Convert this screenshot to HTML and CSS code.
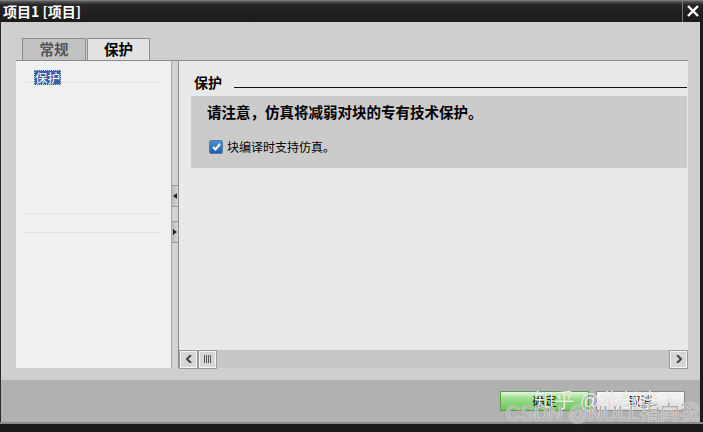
FILE: index.html
```html
<!DOCTYPE html>
<html lang="zh">
<head>
    <meta charset="UTF-8">
    <title>项目1 [项目]</title>
    <link rel="stylesheet" href="styles.css">
</head>
<body>
    <div class="window">
        <div class="titlebar">
            <span class="title">项目1 [项目]</span>
            <span class="close">
                <svg width="14" height="14" viewBox="0 0 14 14"><path d="M2 2 L12 12 M12 2 L2 12" stroke="#fff" stroke-width="2.4" fill="none"/></svg>
            </span>
        </div>

        <div class="frame">
            <div class="tabs">
                <div class="tab">常规</div>
                <div class="tab active">保护</div>
            </div>

            <div class="panel">
                <div class="tree">
                    <div class="tree-row"><span class="tree-item selected">保护</span></div>
                    <div class="tree-spacer"></div>
                    <div class="tree-row"></div>
                    <div class="tree-row"></div>
                </div>

                <div class="splitter">
                    <div class="split-btn">
                        <svg width="4" height="6" viewBox="0 0 4 6"><path d="M4 0 L0 3 L4 6 Z" fill="#222"/></svg>
                    </div>
                    <div class="split-btn second">
                        <svg width="4" height="6" viewBox="0 0 4 6"><path d="M0 0 L4 3 L0 6 Z" fill="#222"/></svg>
                    </div>
                </div>

                <div class="main">
                    <div class="content">
                        <div class="section-head">
                            <span>保护</span>
                            <div class="head-line"></div>
                        </div>
                        <div class="notice">
                            <p class="notice-text">请注意，仿真将减弱对块的专有技术保护。</p>
                            <label class="check">
                                <span class="box">
                                    <svg width="9" height="8" viewBox="0 0 9 8"><path d="M1 4 L3.5 6.5 L8 1" stroke="#fff" stroke-width="2" fill="none"/></svg>
                                </span>
                                块编译时支持仿真。
                            </label>
                        </div>
                    </div>
                    <div class="hscroll">
                        <div class="sb-btn">
                            <svg width="6" height="8" viewBox="0 0 6 8"><path d="M5 0 L1 4 L5 8" stroke="#444" stroke-width="2" fill="none"/></svg>
                        </div>
                        <div class="sb-thumb">
                            <svg width="8" height="8" viewBox="0 0 8 8"><path d="M0.5 0 V8 M2.5 0 V8 M4.5 0 V8 M6.5 0 V8" stroke="#555" stroke-width="1" fill="none"/></svg>
                        </div>
                        <div class="sb-track"></div>
                        <div class="sb-btn">
                            <svg width="6" height="8" viewBox="0 0 6 8"><path d="M1 0 L5 4 L1 8" stroke="#444" stroke-width="2" fill="none"/></svg>
                        </div>
                    </div>
                </div>
            </div>
        </div>

        <div class="footer">
            <button class="btn ok">确定</button>
            <button class="btn cancel">取消</button>
            <div class="mark mark-zhihu">知乎 @北部李工</div>
            <div class="mark mark-csdn">CSDN @NULL指向我</div>
        </div>
        <div class="footer-edge"></div>
        <div class="bottom"></div>
    </div>
</body>
</html>
```

FILE: styles.css
```css
body {
    margin: 0;
    background-color: #1b1b1b;
    font-family: "Noto Sans CJK SC", "Liberation Sans", sans-serif;
}
.window {
    width: 703px;
    height: 432px;
    display: flex;
    flex-direction: column;
    overflow: hidden;
}
.titlebar {
    height: 22px;
    display: flex;
    align-items: center;
    background: linear-gradient(#8a8a8a 0, #4a4a4a 2px, #252525 5px, #1b1b1b 100%);
    color: #fff;
}
.title {
    flex: 1;
    padding-left: 3px;
    font-weight: bold;
    font-size: 14px;
    line-height: 22px;
}
.close {
    width: 20px;
    height: 22px;
    display: flex;
    align-items: center;
    justify-content: center;
    border-left: 1px solid #777;
}
.frame {
    height: 358px;
    display: flex;
    flex-direction: column;
    background-color: #cfcfcf;
    border-left: 1px solid #2a2a2a;
    border-right: 3px solid #1b1b1b;
    padding: 16px 12px 12px 15px;
    box-sizing: border-box;
}
.tabs {
    height: 22px;
    display: flex;
    padding-left: 6px;
    gap: 1px;
}
.tab {
    width: 64px;
    box-sizing: border-box;
    border: 1px solid #8c8c8c;
    border-bottom: none;
    background-color: #c2c2c2;
    color: #555;
    font-weight: bold;
    font-size: 14.5px;
    line-height: 20px;
    text-align: center;
}
.tab.active {
    width: 63px;
    background-color: #e2e2e2;
    color: #000;
}
.panel {
    flex: 1;
    display: flex;
    border-top: 1px solid #8c8c8c;
}
.tree {
    width: 155px;
    background-color: #f0f0f0;
    padding: 3px 10px 0 8px;
    box-sizing: border-box;
}
.tree-row {
    height: 18px;
    border-bottom: 1px solid #e2e2e2;
    padding-left: 10px;
}
.tree-spacer {
    height: 112px;
}
.tree-item {
    display: inline-block;
    font-size: 12.5px;
    line-height: 15px;
    padding: 0 1px;
    color: #fff;
}
.tree-item.selected {
    background-color: #3b5ea6;
    outline: 1px dotted #bcd;
    outline-offset: -1px;
}
.splitter {
    width: 6px;
    background-color: #d2d2d2;
    border-left: 1px solid #a8a8a8;
    border-right: 1px solid #8e8e8e;
    padding-top: 124px;
    box-sizing: content-box;
}
.split-btn {
    height: 20px;
    display: flex;
    align-items: center;
    justify-content: flex-start;
    padding-left: 1px;
    background: linear-gradient(90deg, #b8b8b8, #d8d8d8);
    border-top: 1px solid #999;
    border-bottom: 1px solid #999;
}
.split-btn.second {
    margin-top: 14px;
}
.main {
    flex: 1;
    display: flex;
    flex-direction: column;
    background-color: #e9e9e9;
}
.content {
    flex: 1;
    padding: 12px 1px 0 12px;
}
.section-head {
    display: flex;
    align-items: flex-end;
    gap: 12px;
    padding-left: 3px;
    font-weight: bold;
    font-size: 14px;
    line-height: 18px;
}
.head-line {
    flex: 1;
    border-bottom: 1px solid #111;
    margin-bottom: 3px;
}
.notice {
    margin-top: 5px;
    height: 72px;
    background-color: #cbcbcb;
    padding: 5px 0 0 16px;
    box-sizing: border-box;
}
.notice-text {
    margin: 0;
    font-weight: bold;
    font-size: 14.5px;
    line-height: 22px;
}
.check {
    display: flex;
    align-items: center;
    gap: 4px;
    margin-top: 16px;
    padding-left: 2px;
    font-size: 12px;
    line-height: 16px;
}
.box {
    width: 12px;
    height: 12px;
    display: flex;
    align-items: center;
    justify-content: center;
    background: linear-gradient(#4d8ed8, #1f5fb0);
    border: 1px solid #5a7a9a;
    border-radius: 2px;
}
.hscroll {
    height: 18px;
    display: flex;
    align-items: center;
    background-color: #c6c6c6;
    padding: 0 1px;
    gap: 2px;
}
.sb-btn,
.sb-thumb {
    width: 15px;
    height: 15px;
    display: flex;
    align-items: center;
    justify-content: center;
    background-color: #d6d6d6;
    border: 1px solid #f4f4f4;
    outline: 1px solid #9a9a9a;
}
.sb-track {
    flex: 1;
}
.footer {
    position: relative;
    height: 42px;
    display: flex;
    justify-content: flex-end;
    align-items: flex-start;
    gap: 7px;
    padding: 11px 15px 0 0;
    box-sizing: border-box;
    background-color: #b1b1b1;
    border-left: 1px solid #2a2a2a;
    border-right: 3px solid #1b1b1b;
}
.btn {
    width: 89px;
    height: 20px;
    font-family: "Noto Sans CJK SC", sans-serif;
    font-size: 12px;
    line-height: 16px;
    padding: 0;
    border: 1px solid #8a8a8a;
    color: #111;
}
.btn.ok {
    background: linear-gradient(#e6f6e2 0, #9ede8e 35%, #6cc45c 100%);
    border-color: #5c9a52;
}
.btn.cancel {
    background: linear-gradient(#fafafa, #dcdcdc);
}
.mark {
    position: absolute;
    white-space: nowrap;
    font-family: "Liberation Sans", "Noto Sans CJK SC", sans-serif;
    pointer-events: none;
}
.mark-zhihu {
    left: 533px;
    top: 5px;
    font-size: 20px;
    color: rgba(255, 255, 255, 0.9);
    text-shadow: 0 0 1px rgba(0, 0, 0, 0.3);
}
.mark-csdn {
    left: 505px;
    top: 17px;
    font-size: 20px;
    color: rgba(150, 150, 150, 0.8);
    text-shadow: 0 0 1px #fff, 0 0 1px #fff;
}
.footer-edge {
    height: 2px;
    background-color: #8a8a8a;
}
.bottom {
    flex: 1;
    background-color: #1b1b1b;
}
```
